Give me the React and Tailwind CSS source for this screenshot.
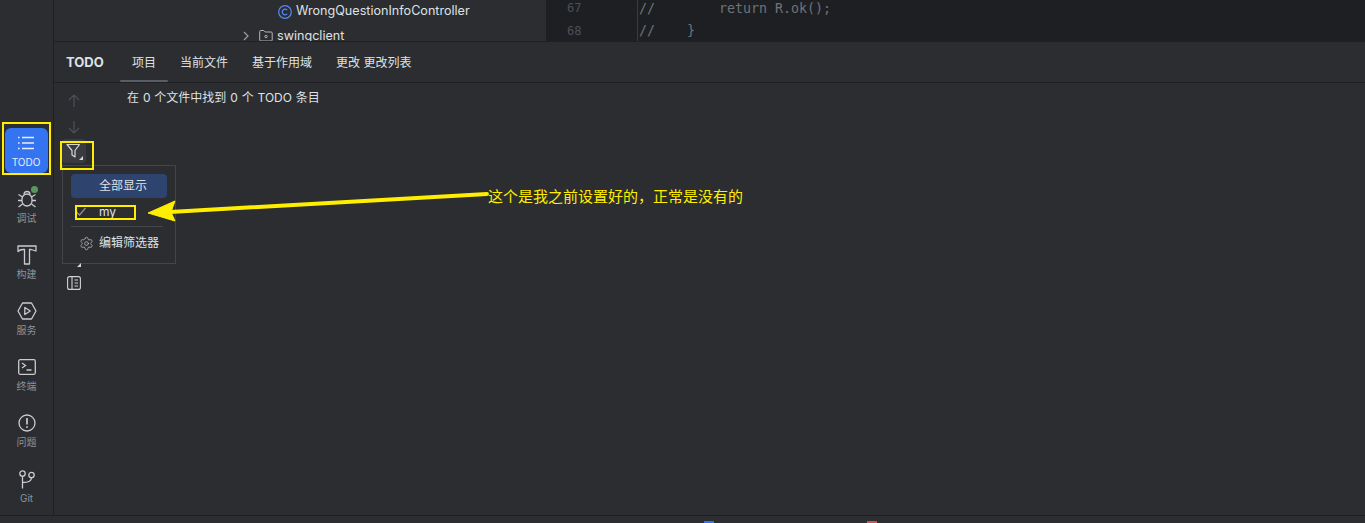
import React from "react";
import { Settings } from "lucide-react";

const uiFont = { fontFamily: 'Inter, "Noto Sans CJK SC", sans-serif' };

const ListIcon = () => (
  <svg width="18" height="16" viewBox="0 0 18 16" fill="none" stroke="#e8effc" strokeWidth="1.300">
    <path d="M1 2.500h1.600M5 2.500h12M1 8h1.600M5 8h12M1 13.500h1.600M5 13.500h12" />
  </svg>
);

const BugIcon = () => (
  <svg width="20" height="20" viewBox="0 0 20 20" fill="none" stroke="#c9cbd0" strokeWidth="1.300">
    <rect x="5" y="5" width="10" height="12" rx="5" />
    <path d="M7 5.500c0-2 1-3 3-3s3 1 3 3M1.500 5.500l4 2.500M1 11.500h4M1.500 18l4-3M18.500 18l-4-3M19 11.500h-4M18.500 5.500l-4 2.500" />
  </svg>
);

const HammerIcon = () => (
  <svg width="20" height="20" viewBox="0 0 20 20" fill="none" stroke="#c9cbd0" strokeWidth="1.300">
    <path d="M1 1h18v5l-5-1.500h-1.500V19h-5V4.500H6C4 4.500 2.500 5 1 6.500z" strokeLinejoin="round" />
  </svg>
);

const ServiceIcon = () => (
  <svg width="20" height="18" viewBox="0 0 20 18" fill="none" stroke="#c9cbd0" strokeWidth="1.300">
    <path d="M5.500 1h9l4.500 8-4.500 8h-9L1 9z" strokeLinejoin="round" />
    <path d="M7.800 5.500l5.500 3.500-5.500 3.500z" strokeLinejoin="round" />
  </svg>
);

const TerminalIcon = () => (
  <svg width="18" height="16" viewBox="0 0 18 16" fill="none" stroke="#c9cbd0" strokeWidth="1.300">
    <rect x="0.700" y="0.700" width="16.600" height="14.600" rx="1.500" />
    <path d="M4 4l3.500 2.500L4 9M8.500 11h5" />
  </svg>
);

const ProblemIcon = () => (
  <svg width="18" height="18" viewBox="0 0 18 18" fill="none" stroke="#c9cbd0" strokeWidth="1.300">
    <circle cx="9" cy="9" r="8" />
    <path d="M9 4v6.500M9 12.300v1.500" strokeWidth="1.700" />
  </svg>
);

const GitIcon = () => (
  <svg width="18" height="19" viewBox="0 0 18 19" fill="none" stroke="#c9cbd0" strokeWidth="1.300">
    <circle cx="4.500" cy="3.500" r="2.700" />
    <circle cx="13.500" cy="5" r="2.700" />
    <path d="M4.500 6.200V18.500M4.500 12.500c5 0 9-1 9-4.800" />
  </svg>
);

const sideItems = [
  { label: "调试", icon: <BugIcon />, dot: true },
  { label: "构建", icon: <HammerIcon /> },
  { label: "服务", icon: <ServiceIcon /> },
  { label: "终端", icon: <TerminalIcon /> },
  { label: "问题", icon: <ProblemIcon /> },
  { label: "Git", icon: <GitIcon /> },
];

const tabs = ["当前文件", "基于作用域", "更改 更改列表"];

const Sidebar = () => (
  <div className="w-[54px] shrink-0 border-r border-[#1f2024] pt-[128px] flex flex-col items-center">
    <div className="shrink-0 w-[43px] h-[45px] mb-[11px] ml-[-1px] rounded-[6px] bg-[#3574f0] flex flex-col items-center pt-[7px]">
      <ListIcon />
      <span className="text-[10px] leading-[14px] mt-[4px] text-[#e8effc]">TODO</span>
    </div>
    {sideItems.map((item) => (
      <div key={item.label} className="relative shrink-0 w-[43px] h-[45px] mb-[11px] flex flex-col items-center pt-[5px]">
        <div className="h-[20px] flex items-center justify-center">{item.icon}</div>
        <span className="text-[10px] leading-[14px] mt-[2px] text-[#8f9298]">{item.label}</span>
        {item.dot && <span className="absolute top-[2px] left-[26px] w-[7px] h-[7px] rounded-full bg-[#57965c]" />}
      </div>
    ))}
  </div>
);

const TopArea = () => (
  <div className="h-[42px] shrink-0 flex bg-[#2b2d30] overflow-hidden border-b border-[#1f2024]">
    <div className="w-[492px] relative text-[12.600px] text-[#dfe1e5]">
      <div className="h-[23px] pl-[224px] flex items-center gap-[4px]">
        <svg width="14" height="14" viewBox="0 0 14 14" fill="none" className="shrink-0">
          <circle cx="7" cy="7" r="6.300" stroke="#548af7" strokeWidth="1.200" />
          <path d="M9.200 5.200a2.800 2.800 0 1 0 0 3.600" stroke="#548af7" strokeWidth="1.200" />
        </svg>
        <span>WrongQuestionInfoController</span>
      </div>
      <div className="h-[24px] pt-[2px] pl-[188px] flex items-center">
        <svg width="8" height="10" viewBox="0 0 8 10" fill="none" stroke="#9a9da3" strokeWidth="1.200" className="mr-[9px]">
          <path d="M2 1l4 4-4 4" />
        </svg>
        <svg width="14" height="12" viewBox="0 0 14 12" fill="none" stroke="#b4b6bb" strokeWidth="1" className="mr-[4px]">
          <path d="M0.700 1.500a1 1 0 0 1 1-1h3l1.500 1.500h6a1 1 0 0 1 1 1v7a1 1 0 0 1-1 1h-10.500a1 1 0 0 1-1-1z" />
          <circle cx="7" cy="6.500" r="1.200" />
        </svg>
        <span>swingclient</span>
      </div>
    </div>
    <div className="flex-1 bg-[#1e1f22] flex" style={{ fontFamily: '"DejaVu Sans Mono", monospace' }}>
      <div className="w-[92px] border-r border-[#393b40] text-[12px] text-[#4b5059] pl-[21px]">
        <div className="h-[16px] leading-[16px]">67</div>
        <div className="h-[23px] leading-[30px]">68</div>
      </div>
      <div className="text-[13.300px] text-[#6f7378] pl-[1px] whitespace-pre">
        <div className="h-[16px] leading-[18px]">{"//        return R.ok();"}</div>
        <div className="h-[23px] leading-[30px]">{"//    }"}</div>
      </div>
    </div>
  </div>
);

const TabBar = () => (
  <div className="h-[41px] shrink-0 flex items-center pt-[2px] border-b border-[#1f2024] text-[12px] text-[#dfe1e5]">
    <span className="ml-[12px] w-[54px] text-[13px] font-bold">TODO</span>
    <div className="relative h-full w-[48px] flex items-center justify-center">
      项目
      <span className="absolute left-0 right-0 bottom-0 h-[2px] rounded-full bg-[#5a5d63]" />
    </div>
    {tabs.map((tab, i) => (
      <span key={tab} className={i === 0 ? "ml-[12px]" : "ml-[24px]"}>{tab}</span>
    ))}
  </div>
);

const ToolColumn = () => (
  <div className="w-[38px] shrink-0 flex flex-col items-center pt-[11px] pl-[1px]">
    <svg width="12" height="14" viewBox="0 0 12 14" fill="none" stroke="#4d5056" strokeWidth="1.200">
      <path d="M6 13V1M1 6l5-5 5 5" />
    </svg>
    <svg width="12" height="14" viewBox="0 0 12 14" fill="none" stroke="#4d5056" strokeWidth="1.200" className="mt-[12px]">
      <path d="M6 1v12M1 8l5 5 5-5" />
    </svg>
    <div className="relative mt-[5px] w-[24px] h-[24px] rounded-[4px] bg-[#393b40] flex items-center justify-center">
      <svg width="16" height="16" viewBox="0 0 16 16" fill="none" stroke="#d5d7db" strokeWidth="1.200">
        <path d="M1 1.500h12.500L9 7.500V14l-3-2V7.500z" strokeLinejoin="round" />
      </svg>
      <span className="absolute right-[3px] bottom-[3px] w-0 h-0 border-l-[4px] border-l-transparent border-b-[4px] border-b-[#d5d7db]" />
    </div>
    <svg width="14" height="14" viewBox="0 0 14 14" fill="none" stroke="#cfd1d5" strokeWidth="1.100" className="mt-[113px]">
      <rect x="0.600" y="0.600" width="12.800" height="12.800" rx="2" />
      <path d="M5 0.600v12.800M7.500 4h3.500M7.500 7h3.500M7.500 10h3.500" />
    </svg>
  </div>
);

const FilterPopup = () => (
  <div className="absolute left-[62px] top-[165px] w-[114px] h-[99px] bg-[#2b2d30] border border-[#43454a] px-[8px] pt-[8px] text-[12px] text-[#dfe1e5]">
    <div className="h-[24px] rounded-[4px] bg-[#2e436e] flex items-center pl-[28px]">全部显示</div>
    <div className="h-[22px] mt-[3px] flex items-center pl-[4px]">
      <svg width="12" height="10" viewBox="0 0 12 10" fill="none" stroke="#8f9298" strokeWidth="1.200" className="mr-[12px]">
        <path d="M1.500 5l3 3 6-7" />
      </svg>
      <span className="leading-none">my</span>
    </div>
    <div className="h-px bg-[#43454a] mt-[3px] mr-[4px]" />
    <div className="h-[26px] mt-[3px] flex items-center pl-[8px]">
      <Settings size={15} strokeWidth={1.300} color="#b4b6bb" className="mr-[5px]" />
      <span>编辑筛选器</span>
    </div>
    <span className="absolute left-[14px] bottom-[-4px] w-0 h-0 border-l-[4px] border-l-transparent border-b-[4px] border-b-[#d5d7db]" />
  </div>
);

const Annotations = () => (
  <>
    <div className="absolute left-[2px] top-[122px] w-[49px] h-[53px] border-2 border-[#ffee00]" />
    <div className="absolute left-[60px] top-[141px] w-[34px] h-[29px] border-2 border-[#ffee00]" />
    <div className="absolute left-[75px] top-[205px] w-[61px] h-[15px] border-2 border-[#ffee00]" />
    <svg className="absolute left-[140px] top-[185px]" width="350" height="45" viewBox="0 0 350 45" fill="none">
      <path d="M347 9L30 27" stroke="#ffee00" strokeWidth="4" strokeLinecap="round" />
      <path d="M8 28L35 16L31 27L35 36z" fill="#ffee00" stroke="#ffee00" strokeLinejoin="round" />
    </svg>
    <span className="absolute left-[488px] top-[187px] text-[15px] leading-[20px] text-[#ffee00]">这个是我之前设置好的，正常是没有的</span>
  </>
);

export default function App() {
  return (
    <div className="relative w-[1365px] h-[523px] overflow-hidden bg-[#2b2d30] flex flex-col" style={uiFont}>
      <div className="flex flex-1 min-h-0">
        <Sidebar />
        <div className="flex-1 flex flex-col min-w-0">
          <TopArea />
          <TabBar />
          <div className="flex-1 flex">
            <ToolColumn />
            <div className="pl-[35px] pt-[7px] text-[12px] leading-[16px] text-[#dfe1e5] [word-spacing:0.500px]">在 0 个文件中找到 0 个 TODO 条目</div>
          </div>
        </div>
      </div>
      <div className="h-[8px] shrink-0 border-t border-[#1f2024] relative">
        <span className="absolute left-[704px] top-[5px] w-[10px] h-[2px] bg-[#3574f0]" />
        <span className="absolute left-[867px] top-[5px] w-[10px] h-[2px] bg-[#c75450]" />
      </div>
      <FilterPopup />
      <Annotations />
    </div>
  );
}
